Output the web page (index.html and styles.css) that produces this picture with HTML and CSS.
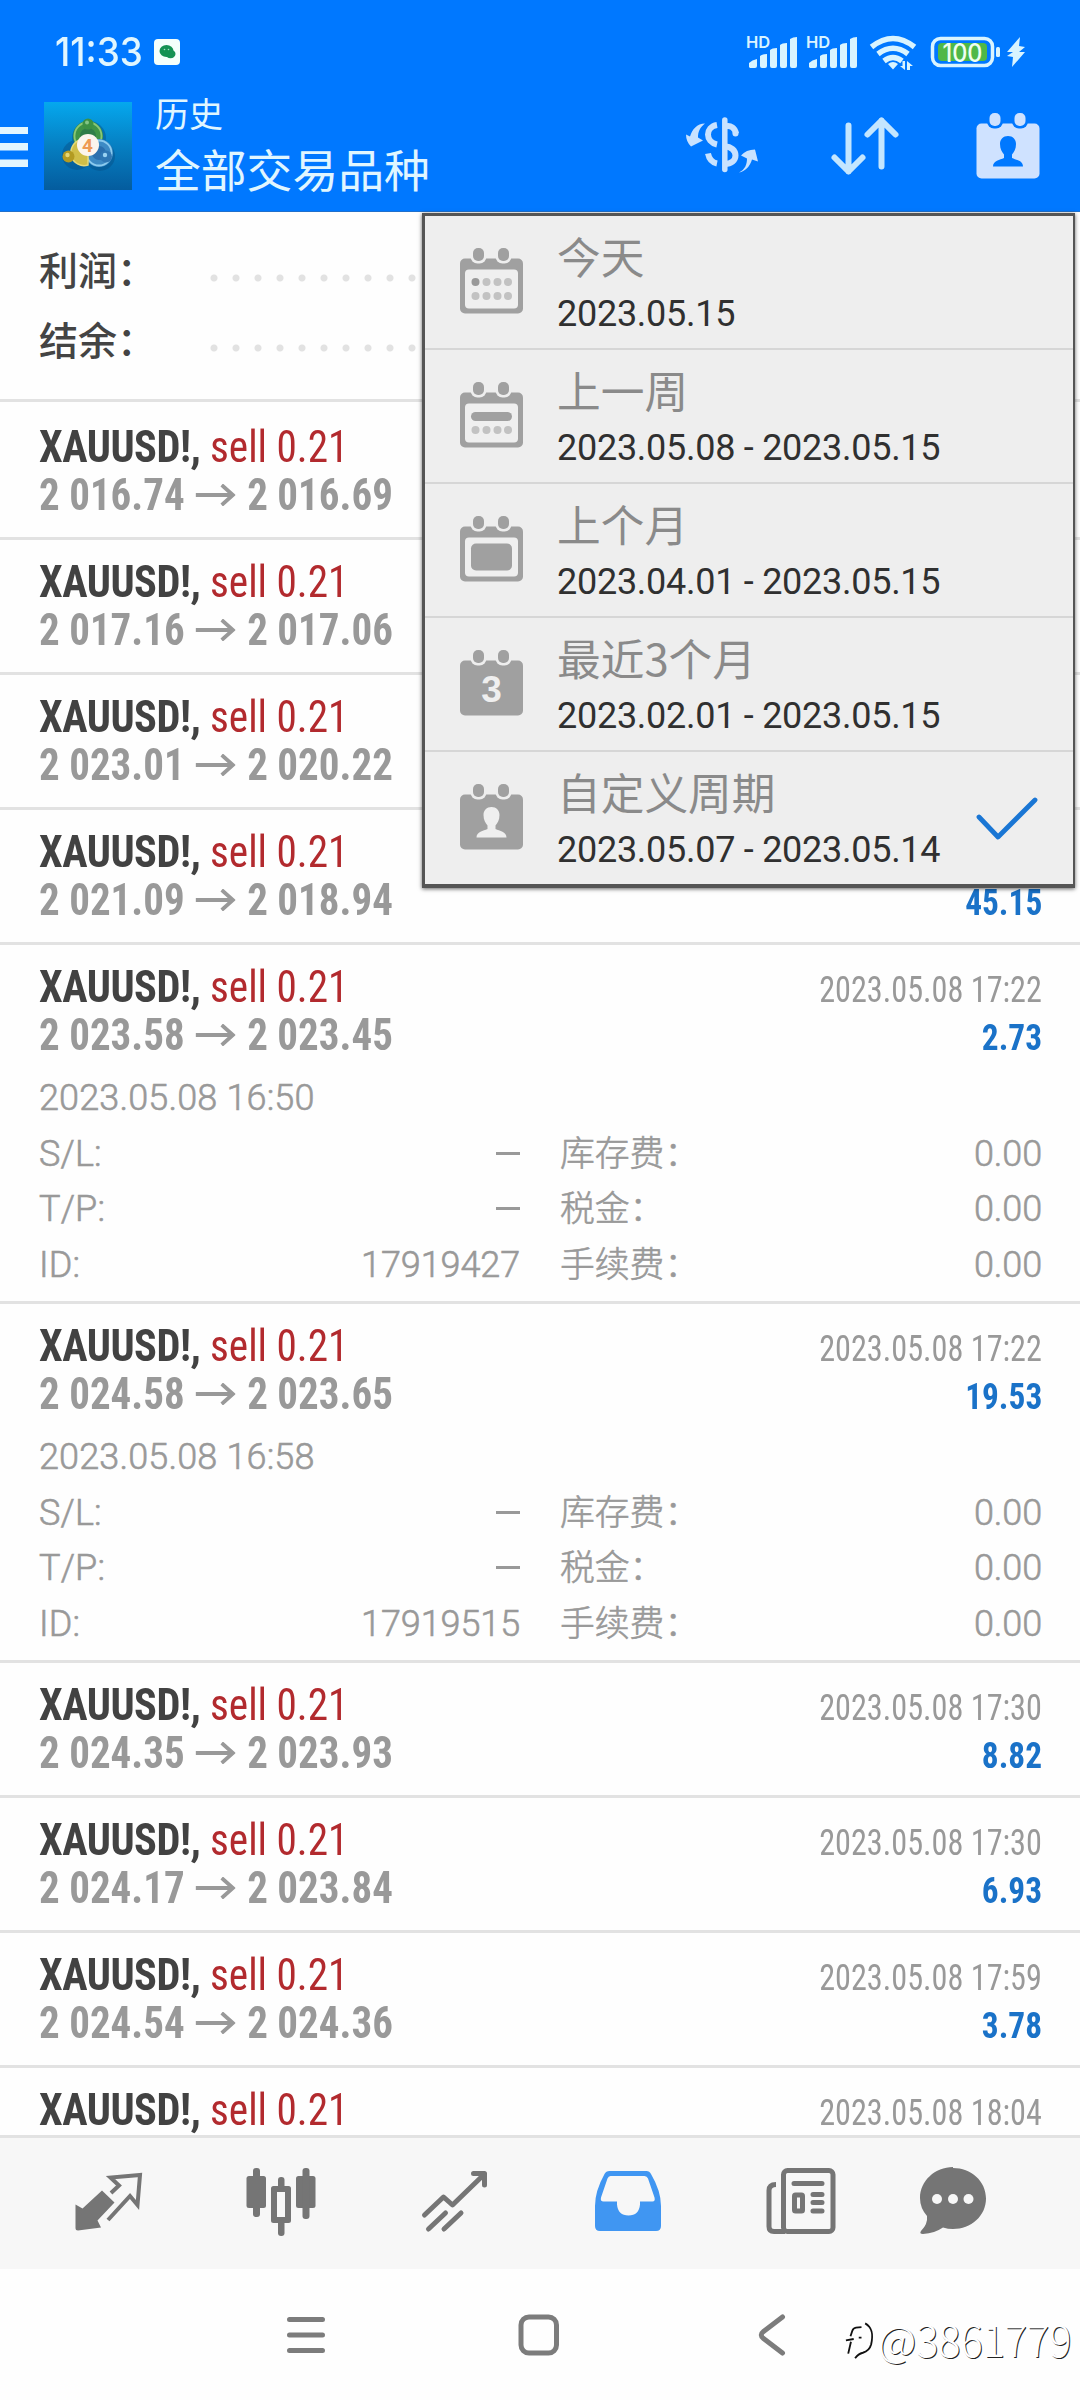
FILE: index.html
```html
<!DOCTYPE html>
<html lang="zh-CN">
<head>
<meta charset="utf-8">
<title>历史</title>
<link rel="stylesheet" href="styles.css">
</head>
<body>
<svg class="defs" width="0" height="0">
  <defs>
    <g id="cal-rings"><rect x="13" y="0" width="11" height="13" rx="5"/><rect x="38" y="0" width="11" height="13" rx="5"/></g>
    <mask id="cal-cut">
      <rect x="-2" y="-2" width="67" height="70" fill="#fff"/>
      <rect x="10.500" y="-3" width="16" height="18.500" rx="7" fill="#000"/><rect x="35.500" y="-3" width="16" height="18.500" rx="7" fill="#000"/>
    </mask>
    <g id="cal-body"><rect x="0" y="10.500" width="63" height="55" rx="5" mask="url(#cal-cut)"/><use href="#cal-rings"/></g>
    <path id="person" d="M31.500 23c4.800 0 8 3.500 8 8 0 5-2 8-4 10.500v3.500c4 2 11 2.500 11 8.500H16.500c0-6 7-6.500 11-8.500v-3.500c-2-2.500-4-5.500-4-10.500 0-4.500 3.200-8 8-8z"/>
    <linearGradient id="logo-bg" x1="0" y1="0" x2="0" y2="1"><stop offset="0" stop-color="#05a8ee"/><stop offset=".5" stop-color="#067fc2"/><stop offset="1" stop-color="#045c9e"/></linearGradient>
  </defs>
</svg>

<header class="header">
  <div class="status">
    <span class="clock">11:33</span>
    <svg class="wechat" viewBox="0 0 26 26"><rect width="26" height="26" rx="4" fill="#f4fffb"/><ellipse cx="12.500" cy="12" rx="7" ry="6" fill="#149253"/><ellipse cx="16.500" cy="15" rx="5" ry="4.200" fill="#149253"/><circle cx="10.500" cy="10.500" r=".8" fill="#9fe0c0"/><circle cx="14.500" cy="10.500" r=".8" fill="#9fe0c0"/></svg>
    <svg class="signals" viewBox="745 30 285 44" fill="#d9f4ff">
      <g id="signal">
        <text class="hd" x="746" y="48">HD</text>
        <path d="M749 67v-4q3-3 8-4v7q0 2-2 2h-5zM760 56q2-2 7-2v12q0 2-2 2h-3q-2 0-2-2zM770 50q2-2 7-2v18q0 2-2 2h-3q-2 0-2-2zM780 45q2-2 7-2v23q0 2-2 2h-3q-2 0-2-2zM790 39q3-2 7-2v29q0 2-2 2h-3q-2 0-2-2z"/>
      </g>
      <use href="#signal" x="60"/>
      <g fill="none" stroke="#d9f4ff" stroke-width="5.500"><path d="M871.500 47q21.500-17 43 0"/><path d="M878 54q15-11.500 30 0"/><path d="M884 61q9-7 18 0"/></g>
      <path d="M888 64q5-4 10 0l-5 5.500zM905 61v9l-5-4h2.500v-5zM907 70v-9l6 5h-3v4z"/>
      <rect x="932.500" y="38.500" width="60" height="27" rx="8" fill="none" stroke="#d9f4ff" stroke-width="3.500"/>
      <rect x="938" y="43" width="49" height="18" rx="4" fill="#4fb848"/>
      <text class="pct" x="962.500" y="61.500" text-anchor="middle" textLength="40" lengthAdjust="spacingAndGlyphs">100</text>
      <rect x="996" y="47" width="4" height="10" rx="1.500"/>
      <path d="M1020 37l-13 15h6l-6 4 6 1-1 10 13-15h-6l6-5-6-1z"/>
    </svg>
  </div>
  <div class="appbar">
    <svg class="menu-icon" viewBox="0 127 28 42" fill="#e3f6ff"><path d="M0 128h28v7H0zM0 144h28v7.500H0zM0 160.500h28v7.500H0z"/></svg>
    <svg class="logo" viewBox="0 0 88 88">
      <rect width="88" height="88" fill="url(#logo-bg)"/>
      <g fill="#064f86" opacity=".45"><circle cx="45" cy="36" r="17"/><circle cx="33" cy="53" r="15"/><circle cx="56" cy="54" r="15"/></g>
      <circle cx="44" cy="34" r="11.500" fill="#2f7d49" stroke="#3f9447" stroke-width="7"/>
      <circle cx="44" cy="34" r="13.500" fill="none" stroke="#8ac776" stroke-width="1.800"/>
      <circle cx="55" cy="51" r="10.500" fill="#2b6fae" stroke="#3d8ac4" stroke-width="7"/>
      <circle cx="55" cy="51" r="12.500" fill="none" stroke="#8ccbee" stroke-width="1.800"/>
      <path d="M44 63a13 13 0 1 1-8-25l8 6z" fill="#d0be48" stroke="#e6d979" stroke-width="1.500"/>
      <circle cx="44" cy="22" r="5.500" fill="#3c9145"/><circle cx="43" cy="20.500" r="2" fill="#83c487"/>
      <circle cx="24.500" cy="54.500" r="6" fill="#b39b22"/><circle cx="23.500" cy="53" r="2.200" fill="#e5d776"/>
      <circle cx="62" cy="54.500" r="6" fill="#2f77b4"/><circle cx="61" cy="53" r="2.200" fill="#9ad2f2"/>
      <circle cx="44" cy="43" r="11" fill="#fcf5ee"/>
      <text class="logo-num" x="43.500" y="49.500" text-anchor="middle">4</text>
    </svg>
    <div class="titles"><div class="screen">历史</div><div class="symbol">全部交易品种</div></div>
    <div class="actions">
      <svg viewBox="672 96.500 100 100" fill="#c8e2ff">
        <g fill="none" stroke="#c8e2ff" stroke-width="6"><path d="M724.800 119.500v49.500" stroke-linecap="round" stroke-width="5.500"/><path d="M717 124.500c-12 2-12 17 0 19.500M708 153c1 5 4 9 9 10M725 126c6-2 10 2 11 7" stroke-linecap="butt"/><path d="M725 146c6 0 10.500 4 10.500 9 0 5-4.500 8.500-10.500 8.500"/></g>
        <circle cx="735.500" cy="133" r="3"/>
        <path d="M686 134l4 2c2-7 7-13 15-13-5 4-7 8-7 14l5 3-12 6q-5-5-5-12zM739 172c6-3 8-8 8-14l-6-3q5-6 14-6l3 12-6-2c-2 7-7 12-13 13z"/>
      </svg>
      <svg viewBox="815 96.500 100 100" fill="none" stroke="#c3e6ff" stroke-width="6" stroke-linecap="round" stroke-linejoin="round"><path d="M848.500 125v46M834.500 157l14 14 14-14M881.500 166v-46M867.500 134l14-14 14 14"/></svg>
      <svg viewBox="958 96.500 100 100"><g transform="translate(976.500 112.500)" fill="#cfe2ff"><use href="#cal-body"/><use href="#person" fill="#0078ff"/></g></svg>
    </div>
  </div>
</header>

<main class="content">
  <section class="summary">
    <div class="sum-row"><span class="sum-label">利润：</span><span class="dots"></span></div>
    <div class="sum-row"><span class="sum-label">结余：</span><span class="dots"></span></div>
  </section>

  <article class="deal first">
    <div class="line"><div><b class="sym">XAUUSD!,</b> <span class="side">sell 0.21</span></div></div>
    <div class="line"><div class="prices">2 016.74<svg class="arrow" viewBox="0 0 43 22"><path d="M0 11h40M28 1l12 10-12 10"/></svg>2 016.69</div></div>
  </article>
  <article class="deal">
    <div class="line"><div><b class="sym">XAUUSD!,</b> <span class="side">sell 0.21</span></div></div>
    <div class="line"><div class="prices">2 017.16<svg class="arrow" viewBox="0 0 43 22"><path d="M0 11h40M28 1l12 10-12 10"/></svg>2 017.06</div></div>
  </article>
  <article class="deal">
    <div class="line"><div><b class="sym">XAUUSD!,</b> <span class="side">sell 0.21</span></div></div>
    <div class="line"><div class="prices">2 023.01<svg class="arrow" viewBox="0 0 43 22"><path d="M0 11h40M28 1l12 10-12 10"/></svg>2 020.22</div></div>
  </article>
  <article class="deal">
    <div class="line"><div><b class="sym">XAUUSD!,</b> <span class="side">sell 0.21</span></div></div>
    <div class="line"><div class="prices">2 021.09<svg class="arrow" viewBox="0 0 43 22"><path d="M0 11h40M28 1l12 10-12 10"/></svg>2 018.94</div><b class="profit">45.15</b></div>
  </article>
  <article class="deal">
    <div class="line"><div><b class="sym">XAUUSD!,</b> <span class="side">sell 0.21</span></div><span class="time">2023.05.08 17:22</span></div>
    <div class="line"><div class="prices">2 023.58<svg class="arrow" viewBox="0 0 43 22"><path d="M0 11h40M28 1l12 10-12 10"/></svg>2 023.45</div><b class="profit">2.73</b></div>
    <div class="details">
      <div class="opened">2023.05.08 16:50</div>
      <span>S/L:</span><span class="val dash"></span><span class="fee">库存费：</span><span class="val">0.00</span>
      <span>T/P:</span><span class="val dash"></span><span class="fee">税金：</span><span class="val">0.00</span>
      <span>ID:</span><span class="val">17919427</span><span class="fee">手续费：</span><span class="val">0.00</span>
    </div>
  </article>
  <article class="deal">
    <div class="line"><div><b class="sym">XAUUSD!,</b> <span class="side">sell 0.21</span></div><span class="time">2023.05.08 17:22</span></div>
    <div class="line"><div class="prices">2 024.58<svg class="arrow" viewBox="0 0 43 22"><path d="M0 11h40M28 1l12 10-12 10"/></svg>2 023.65</div><b class="profit">19.53</b></div>
    <div class="details">
      <div class="opened">2023.05.08 16:58</div>
      <span>S/L:</span><span class="val dash"></span><span class="fee">库存费：</span><span class="val">0.00</span>
      <span>T/P:</span><span class="val dash"></span><span class="fee">税金：</span><span class="val">0.00</span>
      <span>ID:</span><span class="val">17919515</span><span class="fee">手续费：</span><span class="val">0.00</span>
    </div>
  </article>
  <article class="deal">
    <div class="line"><div><b class="sym">XAUUSD!,</b> <span class="side">sell 0.21</span></div><span class="time">2023.05.08 17:30</span></div>
    <div class="line"><div class="prices">2 024.35<svg class="arrow" viewBox="0 0 43 22"><path d="M0 11h40M28 1l12 10-12 10"/></svg>2 023.93</div><b class="profit">8.82</b></div>
  </article>
  <article class="deal">
    <div class="line"><div><b class="sym">XAUUSD!,</b> <span class="side">sell 0.21</span></div><span class="time">2023.05.08 17:30</span></div>
    <div class="line"><div class="prices">2 024.17<svg class="arrow" viewBox="0 0 43 22"><path d="M0 11h40M28 1l12 10-12 10"/></svg>2 023.84</div><b class="profit">6.93</b></div>
  </article>
  <article class="deal">
    <div class="line"><div><b class="sym">XAUUSD!,</b> <span class="side">sell 0.21</span></div><span class="time">2023.05.08 17:59</span></div>
    <div class="line"><div class="prices">2 024.54<svg class="arrow" viewBox="0 0 43 22"><path d="M0 11h40M28 1l12 10-12 10"/></svg>2 024.36</div><b class="profit">3.78</b></div>
  </article>
  <article class="deal">
    <div class="line"><div><b class="sym">XAUUSD!,</b> <span class="side">sell 0.21</span></div><span class="time">2023.05.08 18:04</span></div>
  </article>
</main>

<nav class="tabs">
  <svg viewBox="58 2152 100 100" fill="#757575"><path d="M102 2190.500l12.500 12-17 18 3.500 7-23 3q-2.500 0-2.500-2.500v-23.500l7 4z"/><path d="M111 2193l8-7.500-8.500-8 29.500-2.500-2.500 30-7.500-9-22 24" fill="none" stroke="#757575" stroke-width="4"/></svg>
  <svg viewBox="231 2152 100 100" fill="#757575"><rect x="246.500" y="2176" width="19.500" height="32" rx="2.500"/><rect x="253" y="2168" width="7" height="49" rx="3"/><rect x="296" y="2176" width="19.500" height="32" rx="2.500"/><rect x="302.500" y="2168" width="7" height="51" rx="3"/><path fill-rule="evenodd" d="M273.500 2186h15q2.500 0 2.500 2.500v32q0 2.500-2.500 2.500h-15q-2.500 0-2.500-2.500v-32q0-2.500 2.500-2.500zm3.500 6v25h8v-25z"/><rect x="278" y="2177" width="6.500" height="12" rx="3"/><rect x="278" y="2220" width="6.500" height="16" rx="3"/></svg>
  <svg viewBox="404 2152 100 100" fill="none" stroke="#757575" stroke-width="5" stroke-linecap="round" stroke-linejoin="round"><path d="M424.500 2215l19-18 9 8 32-31M473.500 2173.500h11v11.500M428.500 2229l17-16M444 2229l17-16"/></svg>
  <svg viewBox="577.500 2152 100 100"><path fill="#4096f2" fill-rule="evenodd" d="M609 2171h37q3 0 4.500 3 10 17 10 32v20q0 5-5 5h-56q-5 0-5-5v-20q0-15 9.500-32 1.500-3 5-3zm1 5q-2 0-3 2.500l-6.500 19q-1 4 2.500 4h13.500v3q1 11 11.500 11t11.500-11v-3h12.500q3 0 2-4l-6.500-19q-1-2.500-3.500-2.500z"/></svg>
  <svg viewBox="751 2152 100 100" fill="none" stroke="#757575" stroke-width="5"><rect x="783.500" y="2170.500" width="49.500" height="61" rx="4"/><path d="M776 2184.500q-7 0-7 6v36q0 5 5 5h11" /><path d="M794 2183.500h28M813 2194.500h9M813 2202.500h9M813 2211h9" stroke-linecap="round"/><rect x="794.500" y="2195" width="8" height="16" rx="1"/></svg>
  <svg viewBox="903 2152 100 100"><path fill="#757575" d="M953 2168c18 0 33 13 33 30.500S971 2229 953 2229q-5 0-10-1.500-8 5.500-20 6.500-4 0-2-3 7-7 6-15-7-8-7-18c0-17 15-31 33-31z"/><g fill="#f7f7f7"><circle cx="937" cy="2199" r="5"/><circle cx="953" cy="2199" r="5"/><circle cx="968.500" cy="2199" r="5"/></g></svg>
</nav>

<footer class="sysnav">
  <svg viewBox="276 2305 60 60"><path d="M289.500 2319.500h33M289.500 2335h33M289.500 2350.500h33"/></svg>
  <svg viewBox="509.500 2305 60 60"><rect x="521.500" y="2317" width="35.500" height="36" rx="8"/></svg>
  <svg viewBox="742.500 2305 60 60"><path d="M783 2317l-19 14.500q-4.500 3.500 0 7L783 2353"/></svg>
  <div class="watermark">
    <svg viewBox="0 0 36 46"><g fill="none" stroke="#111" stroke-width="2"><path d="M3.500 39l3-13M1 24.500l8.500-1.500M6 20l2-6q1-3 4-3.500l6-.5M22 6c9 5 8.500 14 6.500 23q-2 7-9 9-5 1-8.500 6M15 21.500h3"/></g></svg>
    <span>@3861779</span>
  </div>
</footer>

<div class="periods">
  <div class="period"><svg viewBox="0 0 63 66"><g fill="#a0a0a0"><use href="#cal-body"/></g><rect x="5" y="21.500" width="53" height="39" rx="4" fill="#efefef"/><circle cx="15.500" cy="34" r="4" fill="#999"/><g fill="#c2c2c2"><circle cx="26.500" cy="34" r="4"/><circle cx="37.500" cy="34" r="4"/><circle cx="48" cy="34" r="4"/><circle cx="15.500" cy="48" r="4"/><circle cx="26.500" cy="48" r="4"/><circle cx="37.500" cy="48" r="4"/><circle cx="48" cy="48" r="4"/></g></svg>
    <div><div class="p-name">今天</div><div class="p-range">2023.05.15</div></div></div>
  <div class="period"><svg viewBox="0 0 63 66"><g fill="#a0a0a0"><use href="#cal-body"/></g><rect x="5" y="21.500" width="53" height="39" rx="4" fill="#efefef"/><rect x="11" y="30" width="41" height="9" rx="4.500" fill="#a0a0a0"/><g fill="#c2c2c2"><circle cx="15.500" cy="48" r="4"/><circle cx="26.500" cy="48" r="4"/><circle cx="37.500" cy="48" r="4"/><circle cx="48" cy="48" r="4"/></g></svg>
    <div><div class="p-name">上一周</div><div class="p-range">2023.05.08 - 2023.05.15</div></div></div>
  <div class="period"><svg viewBox="0 0 63 66"><g fill="#a0a0a0"><use href="#cal-body"/></g><rect x="5" y="21.500" width="53" height="39" rx="4" fill="#efefef"/><rect x="11" y="27.500" width="41" height="27" rx="5" fill="#a0a0a0"/></svg>
    <div><div class="p-name">上个月</div><div class="p-range">2023.04.01 - 2023.05.15</div></div></div>
  <div class="period"><svg viewBox="0 0 63 66"><g fill="#a0a0a0"><use href="#cal-body"/></g><text class="cal-num" x="31.500" y="52" text-anchor="middle">3</text></svg>
    <div><div class="p-name">最近3个月</div><div class="p-range">2023.02.01 - 2023.05.15</div></div></div>
  <div class="period"><svg viewBox="0 0 63 66"><g fill="#a0a0a0"><use href="#cal-body"/></g><use href="#person" fill="#efefef"/></svg>
    <div><div class="p-name">自定义周期</div><div class="p-range">2023.05.07 - 2023.05.14</div></div>
    <svg class="check" viewBox="0 0 64 46"><path d="M4 20l19 20L60 3"/></svg></div>
</div>
</body>
</html>
```
FILE: styles.css
```css
* { box-sizing: border-box; }
body {
  margin: 0;
  width: 1080px;
  height: 2400px;
  display: flex;
  flex-direction: column;
  position: relative;
  overflow: hidden;
  background: #fefefe;
  font-family: Roboto, "Noto Sans CJK SC", sans-serif;
}
svg { display: block; flex: none; }
.defs { position: absolute; }

.header {
  height: 212px;
  flex: none;
  background: #0078ff;
  border-bottom: 1px solid #2070cc;
  color: #e0f6ff;
}
.status {
  height: 92px;
  padding: 12px 50px 0 55px;
  display: flex;
  align-items: center;
}
.clock {
  font: 500 40px/50px Inter, sans-serif;
  width: 99px;
  transform: scaleX(0.92);
  transform-origin: left;
}
.wechat { width: 26px; height: 26px; }
.signals { width: 285px; height: 44px; margin-left: auto; }
.hd { font: 600 16.500px Inter, sans-serif; }
.pct { font: 500 25px Inter, sans-serif; fill: #f0fff0; }

.appbar {
  height: 119px;
  padding: 0 22px 11px 0;
  display: flex;
  align-items: center;
}
.menu-icon { width: 28px; height: 42px; margin-top: 2px; }
.logo { width: 88px; height: 88px; margin-left: 16px; }
.logo-num { font: 700 19px Roboto, sans-serif; fill: #ee9a55; }
.titles {
  align-self: flex-start;
  margin-left: 23px;
  font-family: "Noto Sans CJK SC", sans-serif;
}
.screen { font-size: 34px; line-height: 42px; }
.symbol { font-size: 45.800px; line-height: 68px; }
.actions { margin: 2px 0 0 auto; display: flex; gap: 43px; }
.actions svg { width: 100px; height: 100px; }

.content { flex: 1; min-height: 0; overflow: hidden; }
.summary { height: 190px; padding: 21px 38px 0 39px; border-bottom: 3px solid #e2e2e2; }
.sum-row { height: 70px; display: flex; align-items: center; }
.sum-label {
  width: 164px;
  font: 500 39px/70px "Noto Sans CJK SC", sans-serif;
  color: #444;
}
.dots {
  flex: 1;
  height: 8px;
  margin-top: 20px;
  background: radial-gradient(circle at 11px 4px, #e2e2e2 3px, transparent 4px) 0 0 / 22px 8px;
}

.deal {
  padding: 18px 38px 18px 39px;
  border-bottom: 3px solid #e2e2e2;
  font-family: "Roboto Condensed", Roboto, sans-serif;
}
.first { padding-top: 21px; }
.line {
  height: 48px;
  line-height: 48px;
  display: flex;
  justify-content: space-between;
  align-items: baseline;
  font-size: 44px;
  white-space: nowrap;
}
.sym, .side { display: inline-block; transform-origin: left; }
.sym { color: #424242; letter-spacing: -0.500px; transform: scaleX(0.963); margin-right: -6.500px; }
.side { color: #b22a2e; transform: scaleX(0.937); }
.prices {
  display: flex;
  align-items: center;
  color: #999;
  font-weight: 700;
  transform: scaleX(0.932);
  transform-origin: left;
}
.arrow {
  width: 43px;
  height: 22px;
  margin: 0 12px 0 12px;
  fill: none;
  stroke: #999;
  stroke-width: 4;
}
.time, .profit { font-size: 36px; transform-origin: right; }
.time { color: #999; transform: scaleX(0.895); }
.profit { color: #1a72c8; transform: scaleX(0.926); }

.details {
  margin-top: 12px;
  margin-bottom: -10px;
  display: grid;
  grid-template-columns: 120px 361px 260px 262px;
  grid-auto-rows: 55.500px;
  line-height: 55.500px;
  font-family: Roboto, "Noto Sans CJK SC", sans-serif;
  font-size: 36px;
  font-weight: 300;
  letter-spacing: 0.150px;
  -webkit-text-stroke: 0.600px #999;
  color: #999;
}
.opened { grid-column: 1 / -1; }
.val { text-align: right; letter-spacing: -0.100px; }
.dash::after {
  content: "";
  display: inline-block;
  width: 24px;
  height: 3px;
  margin-bottom: 11px;
  background: #999;
}
.fee {
  padding-left: 40px;
  font: 300 34.800px/49px "Noto Sans CJK SC", sans-serif;
  letter-spacing: 0;
}

.tabs {
  height: 134px;
  flex: none;
  display: grid;
  grid-template-columns: repeat(5, 173.300px) 131px;
  justify-items: center;
  padding: 14px 0 0 21px;
  background: #f7f7f7;
  border-top: 3px solid #e2e2e2;
}
.tabs svg { width: 100px; height: 100px; }

.sysnav {
  height: 131px;
  flex: none;
  position: relative;
  display: flex;
  align-items: center;
  justify-content: center;
  gap: 173px;
  padding-right: 2px;
}
.sysnav > svg {
  width: 60px;
  height: 60px;
  fill: none;
  stroke: #7c7c7c;
  stroke-width: 5;
  stroke-linecap: round;
}
.watermark {
  position: absolute;
  left: 845px;
  top: 47px;
  display: flex;
  align-items: flex-start;
}
.watermark svg { width: 33px; height: 46px; }
.watermark span {
  font: 300 42px/46px "Noto Sans CJK SC", sans-serif;
  letter-spacing: -0.300px;
  color: #fff;
  text-shadow: 1px 1px 0 #222;
}

.periods {
  position: absolute;
  left: 422px;
  top: 213px;
  width: 653px;
  border: 3px solid #555;
  border-right-width: 2px;
  border-bottom-width: 4px;
  background: #eee;
  box-shadow: 0 1px 4px rgba(0, 0, 0, 0.6);
}
.period {
  height: 134px;
  display: flex;
  align-items: flex-start;
  padding: 0 0 0 35px;
  border-bottom: 2px solid #d6d6d6;
}
.period:last-child { height: 132px; border-bottom: 0; }
.period > svg { width: 63px; height: 66px; margin: 32px 34px 0 0; }
.p-name {
  margin-top: 7px;
  font: 400 43.700px/64px "Noto Sans CJK SC", sans-serif;
  color: #8a8a8a;
}
.p-range { margin-top: 2px; font-size: 36px; line-height: 50px; letter-spacing: -0.270px; color: #303030; }
.cal-num { font: 700 37px "Liberation Sans", sans-serif; fill: #efefef; }
.period > .check {
  width: 64px;
  height: 46px;
  margin: 45px 34px 0 auto;
  fill: none;
  stroke: #1a76d4;
  stroke-width: 4.800;
  stroke-linecap: round;
  stroke-linejoin: round;
}
```
